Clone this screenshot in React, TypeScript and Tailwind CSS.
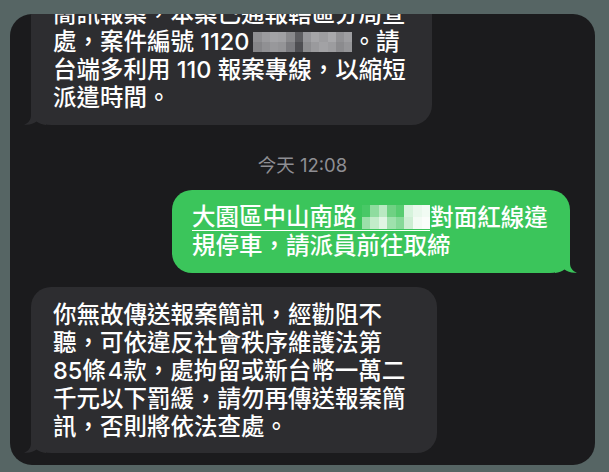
import React from 'react';

const GREY_MOSAIC = [
  '#8f8f92', '#9b9b9e', '#a3a3a6', '#a0a0a3', '#8a8a8d', '#5d5d61', '#96969a', '#a5a5a8', '#9d9da0', '#a8a8ab', '#929295', '#9e9ea1',
  '#858588', '#909093', '#98989b', '#949497', '#7b7b7f', '#4e4e52', '#8d8d90', '#9a9a9d', '#a2a2a5', '#9c9c9f', '#8b8b8e', '#959598',
];

const GREEN_MOSAIC = [
  '#48c866', '#8fdc9f', '#b9e9c2', '#6fd183', '#57cc70', '#d6f3dc', '#e9f8ec', '#f1fbf3',
  '#9ae0a9', '#c3ecca', '#e0f5e4', '#9ee1ac', '#86d998', '#cdeed3', '#f3fbf4', '#fafdfa',
];

function Mosaic({ cols, cellW, cellH, colors }: { cols: number; cellW: number; cellH: number; colors: string[] }) {
  return (
    <span
      className="grid"
      style={{ gridTemplateColumns: `repeat(${cols}, ${cellW}px)`, gridAutoRows: `${cellH}px` }}
    >
      {colors.map((c, i) => (
        <span key={i} style={{ backgroundColor: c }} />
      ))}
    </span>
  );
}

const LeftTail = ({ color }: { color: string }) => (
  <svg className="absolute left-[-7px] bottom-0" width="22" height="21" viewBox="0 0 22 21">
    <path d="M7 0 L7 11 C7 16 4.5 19 0 20.6 C5 21.3 9.5 20 12.5 17.6 C15 19.6 18 20.6 22 21 L22 0 Z" fill={color} />
  </svg>
);

const RightTail = ({ color }: { color: string }) => (
  <svg className="absolute right-[-7px] bottom-0" width="22" height="21" viewBox="0 0 22 21">
    <path d="M15 0 L15 11 C15 16 17.5 19 22 20.6 C17 21.3 12.5 20 9.5 17.6 C7 19.6 4 20.6 0 21 L0 0 Z" fill={color} />
  </svg>
);

const Line = ({ children }: { children: React.ReactNode }) => (
  <div className="h-[28px] whitespace-nowrap">{children}</div>
);

export default function App() {
  return (
    <div className="w-[609px] h-[472px] bg-[#566564] pl-[10px] pr-[14px] pt-[14px] pb-[7px]">
      <div className="h-full rounded-[22px] bg-[#1b1b1d] overflow-hidden flex flex-col text-white font-medium text-[23.5px] leading-[28px] font-['Inter','Noto_Sans_CJK_TC',sans-serif]">
        {/* earlier message, cut off at the top */}
        <div className="relative ml-[21px] mt-[-27px] w-[401px] shrink-0 rounded-[20px] bg-[#2d2d30] pl-[22px] pt-[13px] pb-[13px]">
          <Line>簡訊報案，本案已通報轄區分局查</Line>
          <Line>
            處，案件編號 1120
            <span className="inline-block align-top mt-[4px] ml-[4px]">
              <Mosaic cols={12} cellW={8.25} cellH={10} colors={GREY_MOSAIC} />
            </span>
            。請
          </Line>
          <Line>台端多利用 110 報案專線，以縮短</Line>
          <Line>派遣時間。</Line>
          <LeftTail color="#2d2d30" />
        </div>

        <div className="mt-[30px] text-center text-[18.5px] leading-[20px] font-normal text-[#8e8e93]">今天 12:08</div>

        <div className="relative self-end mr-[25px] mt-[15px] w-[398px] shrink-0 rounded-[20px] bg-[#3bc55b] pl-[20px] pt-[14px] pb-[13px]">
          <Line>
            <span className="inline-flex h-[27px] items-center align-top border-b-[1.5px] border-white">
              <span>大園區中山南路</span>
              <span className="self-start mt-[1px] ml-[5px]">
                <Mosaic cols={8} cellW={8.6} cellH={12} colors={GREEN_MOSAIC} />
              </span>
            </span>
            對面紅線違
          </Line>
          <Line>規停車，請派員前往取締</Line>
          <RightTail color="#3bc55b" />
        </div>

        <div className="relative ml-[21px] mt-[14px] w-[406px] shrink-0 rounded-[20px] bg-[#2d2d30] pl-[22px] pt-[14px] pb-[12px]">
          <Line>你無故傳送報案簡訊，經勸阻不</Line>
          <Line>聽，可依違反社會秩序維護法第</Line>
          <Line>85條&#8202;4款，處拘留或新台幣一萬二</Line>
          <Line>千元以下罰緩，請勿再傳送報案簡</Line>
          <Line>訊，否則將依法查處。</Line>
          <LeftTail color="#2d2d30" />
        </div>
      </div>
    </div>
  );
}
